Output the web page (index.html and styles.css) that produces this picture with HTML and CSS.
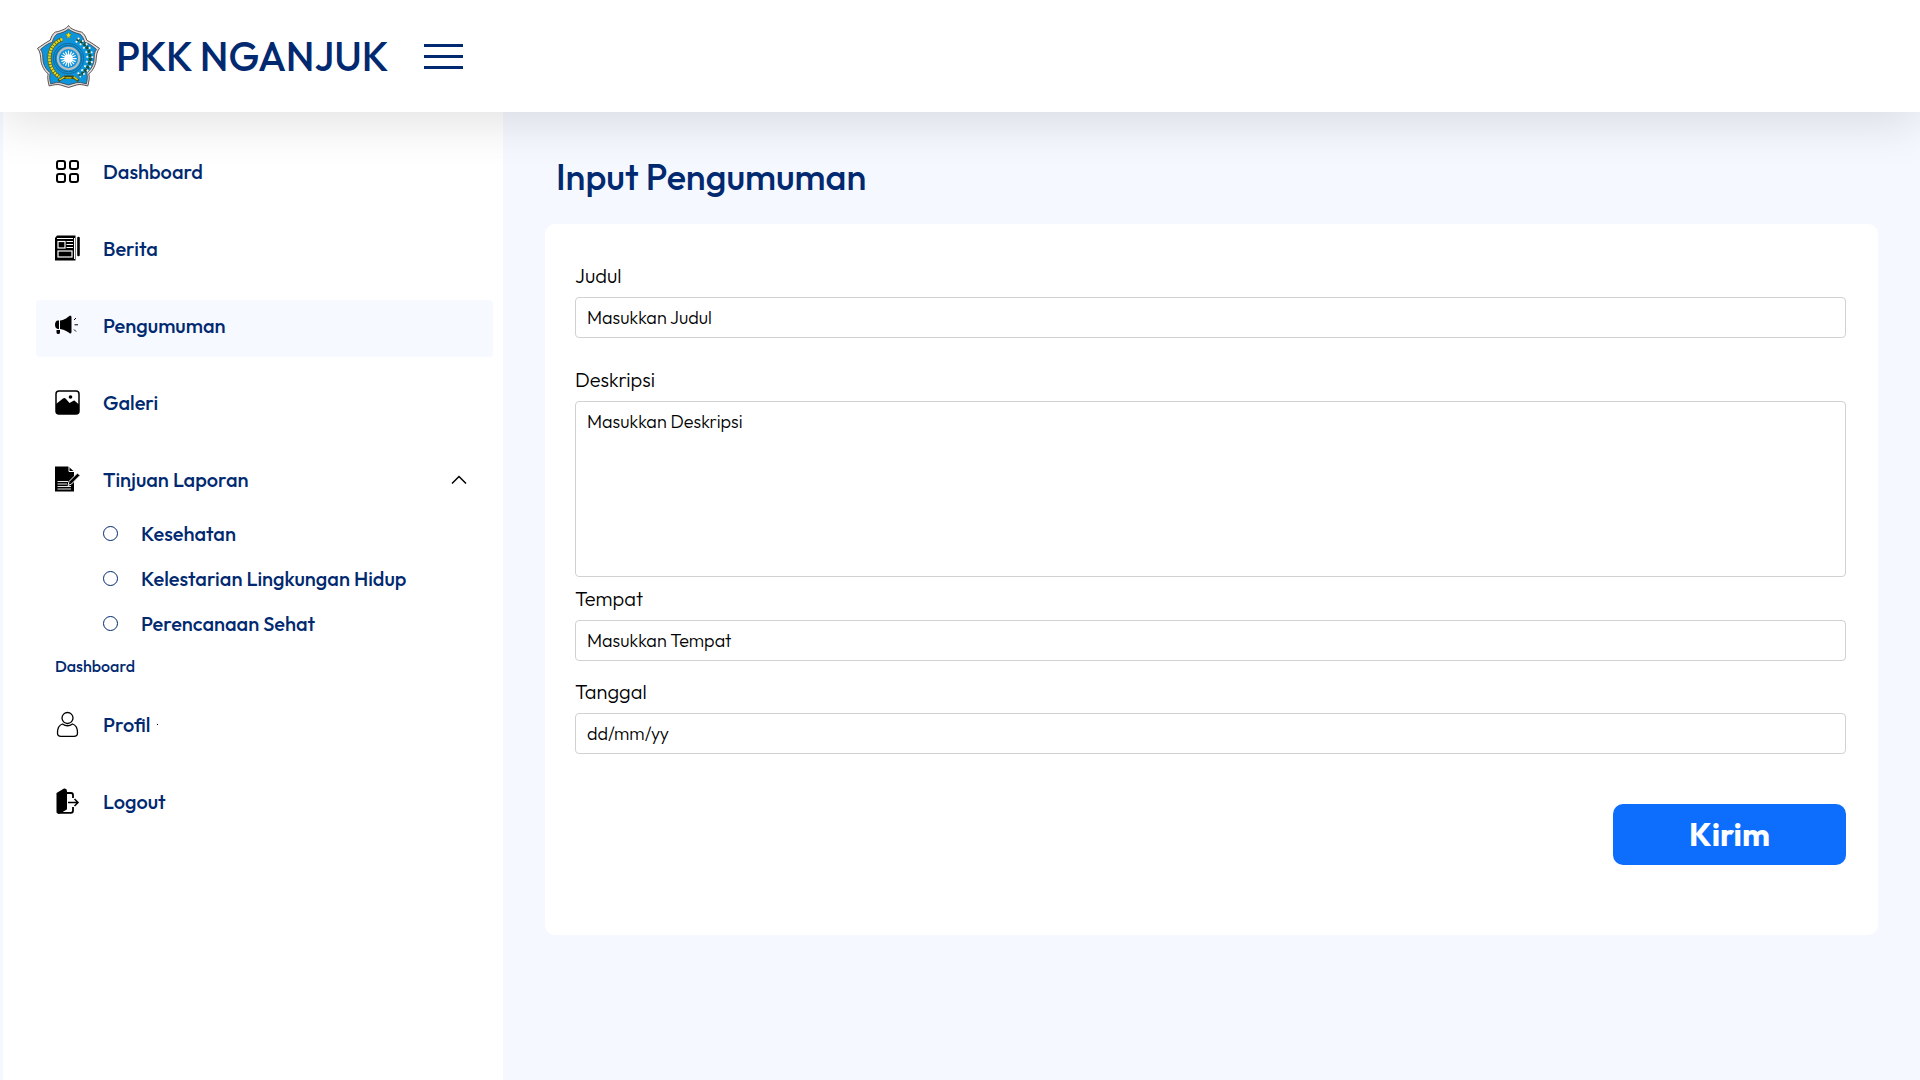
FILE: index.html
```html
<!DOCTYPE html>
<html lang="id">
<head>
<meta charset="utf-8">
<meta name="viewport" content="width=device-width, initial-scale=1">
<title>PKK Nganjuk - Input Pengumuman</title>
<link rel="stylesheet" href="styles.css">
</head>
<body>
<header class="topbar">
  <a class="brand" href="#">
    <svg class="logo" viewBox="0 0 62 62" aria-hidden="true">
      <path d="M31 .5C33 4 39 6 44 7C47 9 48 12 49 15C53 17 57 20 61.500 23C58.500 26 58.500 31 58 36C57 41 54 46 51 48C52 52 51 56 50 60C46 59 42 58 39 59L31 61.500L23 59C20 58 16 59 12 60C11 56 10 52 11 48C8 46 5 41 4 36C3.500 31 3.500 26 .5 23C5 20 9 17 13 15C14 12 15 9 18 7C23 6 29 4 31 .5Z" fill="#e2dede" stroke="#4a4040" stroke-width=".9"/>
      <path d="M31 4C34 6.500 38 8 42.500 9C45 11 46 14 47 17C51 18 55 21 58.500 24C56 27 56.500 31 56 36C55 41 52 45 49 47C50 51 49.500 54 48.500 58C45 57 41 56 38 57L31 59L24 57C21 56 17 57 13.500 58C12.500 54 12 51 13 47C10 45 7 41 6 36C5.500 31 6 27 3.500 24C7 21 11 18 15 17C16 14 17 11 19.500 9C24 8 28 6.500 31 4Z" fill="#0d95dc" stroke="#3d4147" stroke-width=".8"/>
      <path d="M31 7l1 2h2l-2 2 1 2-2-1-2 1 1-2-2-2h2z" fill="#ffe800" stroke="#6a6410" stroke-width=".4"/>
      <circle cx="31" cy="33" r="15" fill="none" stroke="#195d86" stroke-width=".8"/>
      <circle cx="31" cy="33" r="13" fill="#0d8fd0" stroke="#195d86" stroke-width=".8"/>
      <circle cx="31" cy="33" r="10.500" fill="#0d95dc" stroke="#b9bdc2" stroke-width="2"/>
      <path d="M31 25v16M23 33h16M25.500 27.500l11 11M36.500 27.500L25.500 38.500M28 26l6 14M34 26l-6 14M24 30l14 6M24 36l14-6" stroke="#fff" stroke-width="1.200"/>
      <circle cx="31" cy="33" r="4" fill="#fff"/>
      <path d="M25 14C9 19 8 42 22 51" fill="none" stroke="#59601a" stroke-width="4"/>
      <path d="M25 14C9 19 8 42 22 51" fill="none" stroke="#e8dc20" stroke-width="2.600" stroke-dasharray="2 .8"/>
      <path d="M39 14C56 21 57 42 41 50" fill="none" stroke="#15543a" stroke-width="3" stroke-dasharray="3 1"/>
      <path d="M40 13C59 21 59 42 42 51M38 16C53 23 53 40 40 48" fill="none" stroke="#f5f5f5" stroke-width="1.800" stroke-dasharray="1.800 3"/>
      <path d="M21 55l6-4h8l6 4M27 52h8" fill="none" stroke="#3f4712" stroke-width="2.400"/>
      <path d="M22 54l5-3M28 52h6M36 51l4 3" stroke="#d6c81f" stroke-width="1.400"/>
    </svg>
    <span>PKK NGANJUK</span>
  </a>
  <button class="menu-toggle" type="button" aria-label="Menu"><span></span><span></span><span></span></button>
</header>
<div class="layout">
  <nav class="sidebar">
    <a class="item" href="#">
      <svg class="icon" viewBox="0 0 26 26" fill="none" stroke="#000" stroke-width="2"><rect x="3" y="3" width="8" height="8" rx="2"/><rect x="16" y="3" width="8" height="8" rx="2"/><rect x="3" y="16" width="8" height="8" rx="2"/><rect x="16" y="16" width="8" height="8" rx="2"/></svg>
      <span>Dashboard</span>
    </a>
    <a class="item" href="#">
      <svg class="icon" viewBox="0 0 26 26"><path d="M3 0.500H21.500V25.500H1V3Z"/><path d="M24.500 3V20" stroke="#000" stroke-width="2.600" stroke-linecap="round"/><path d="M3 3.500H19" stroke="#fff"/><rect x="4" y="6.500" width="7" height="6.500" fill="none" stroke="#fff" stroke-width="1.200"/><path d="M12.500 6.500H19M12.500 9.500H19M12.500 12.500H19" stroke="#fff" stroke-width="1.200"/><rect x="4" y="16" width="14" height="6" fill="none" stroke="#fff" stroke-width="1.200"/><path d="M20.500 3V24" stroke="#fff"/></svg>
      <span>Berita</span>
    </a>
    <a class="item item-active" href="#" aria-current="page">
      <svg class="icon" viewBox="0 0 26 26"><path d="M5 8.500V17H4C2 17 1 15 1 12.800S2 8.500 4 8.500ZM6 8.500C11 8 14 5 16 3.500Q17.500 3.500 17.500 5V20Q17.500 21.500 16 21.500C14 20 11 17.500 6 17ZM2.500 18H6V20.500Q6 22 4.300 22T2.500 20.500Z"/><path d="M20 8l2-2M20.500 12.800H24M20 17.500l2 2" fill="none" stroke="#000"/></svg>
      <span>Pengumuman</span>
    </a>
    <a class="item" href="#">
      <svg class="icon" viewBox="0 0 26 26"><rect x="2" y="2" width="23" height="23" rx="3" fill="none" stroke="#000" stroke-width="1.500"/><path d="M2 15L9 9.500Q10.500 8.500 12 10L15.500 14L19 12Q20.500 11 21.500 12.500L25 15.500V22Q25 25 22 25H5Q2 25 2 22Z"/><circle cx="16.500" cy="8" r="1.800"/></svg>
      <span>Galeri</span>
    </a>
    <a class="item" href="#" aria-expanded="true">
      <svg class="icon" viewBox="0 0 26 26"><path d="M1 .5H14.500L20 5.500V25.500H1Z"/><path d="M15 0V5.500H20" fill="none" stroke="#fff"/><path d="M3.500 15.500H14M3.500 18H13M3.500 20.500H17M3.500 23H17" stroke="#fff" stroke-width=".9"/><path d="M14 19.500L15 15.500L23.500 7L26 9.500L17.500 18Z" stroke="#fff" stroke-width="1"/></svg>
      <span>Tinjuan Laporan</span>
      <svg class="chevron" viewBox="0 0 15 9" fill="none" stroke="#000" stroke-width="1.500"><path d="M.5 8.500L7.500 1.500L14.500 8.500"/></svg>
    </a>
    <ul class="submenu">
      <li><a href="#"><span class="ring"></span>Kesehatan</a></li>
      <li><a href="#"><span class="ring"></span>Kelestarian Lingkungan Hidup</a></li>
      <li><a href="#"><span class="ring"></span>Perencanaan Sehat</a></li>
    </ul>
    <p class="section">Dashboard</p>
    <a class="item" href="#">
      <svg class="icon" viewBox="0 0 26 26" fill="none" stroke="#000" stroke-width="1.300"><circle cx="13.500" cy="7" r="5.500"/><path d="M8.500 13C12 15.500 15 15.500 18.500 13C22 14 23.500 17 23.500 22Q23.500 25.300 20 25.300H7Q3.500 25.300 3.500 22C3.500 17 5 14 8.500 13Z"/></svg>
      <span>Profil</span><i class="speck"></i>
    </a>
    <a class="item" href="#">
      <svg class="icon" viewBox="0 0 26 26"><path d="M2.500 5L10 .5Q13 0 13 3V20.500Q13 21.500 12 22L6 25.500H4Q2.500 25.500 2.500 24Z"/><path d="M12 5H17Q19 5 19 7V10M19 19V22.500Q19 24.800 17 24.800H4" fill="none" stroke="#000" stroke-width="1.800"/><path d="M14 14.500H24M20.500 11L24 14.500L20.500 18" fill="none" stroke="#000" stroke-width="1.500"/></svg>
      <span>Logout</span>
    </a>
  </nav>
  <main class="content">
    <h1>Input Pengumuman</h1>
    <form class="card">
      <div class="field field-spaced">
        <label for="judul">Judul</label>
        <input id="judul" type="text" placeholder="Masukkan Judul">
      </div>
      <div class="field field-tight">
        <label for="deskripsi">Deskripsi</label>
        <textarea id="deskripsi" placeholder="Masukkan Deskripsi"></textarea>
      </div>
      <div class="field">
        <label for="tempat">Tempat</label>
        <input id="tempat" type="text" placeholder="Masukkan Tempat">
      </div>
      <div class="field">
        <label for="tanggal">Tanggal</label>
        <input id="tanggal" type="text" placeholder="dd/mm/yy">
      </div>
      <button class="submit" type="submit">Kirim</button>
    </form>
  </main>
</div>
</body>
</html>
```
FILE: styles.css
```css
* {
  box-sizing: border-box;
}

body {
  margin: 0;
  min-height: 100vh;
  display: flex;
  flex-direction: column;
  background: #f5f8ff;
  color: #012970;
  font-family: Outfit, Lato, sans-serif;
}

a {
  color: inherit;
  text-decoration: none;
}

.topbar {
  position: relative;
  z-index: 1;
  display: flex;
  align-items: center;
  gap: 35px;
  height: 112px;
  padding: 0 37px;
  background: #fff;
  box-shadow: 0 10px 50px rgba(0, 0, 0, 0.12);
}

.brand {
  display: flex;
  align-items: center;
  gap: 16px;
  font-size: 40px;
  font-weight: 500;
  line-height: 50px;
}

.logo {
  width: 63px;
  height: 63px;
}

.menu-toggle {
  display: flex;
  flex-direction: column;
  gap: 8px;
  width: 39px;
  padding: 0;
  border: 0;
  background: none;
}

.menu-toggle span {
  height: 3px;
  background: #012970;
}

.layout {
  flex: 1;
  display: flex;
}

.sidebar {
  flex: none;
  width: 500px;
  margin-left: 3px;
  padding: 34px 10px 34px 33px;
  background: #fff;
  font-size: 20px;
  font-weight: 500;
  line-height: 25px;
}

.item {
  display: flex;
  align-items: center;
  height: 57px;
  margin-bottom: 20px;
  padding: 0 26px 7px 18px;
  border-radius: 4px;
}

.item-active {
  background: #f6f9ff;
}

.icon {
  width: 26px;
  height: 26px;
  margin-right: 23px;
}

.chevron {
  width: 16px;
  height: 9px;
  margin-left: auto;
}

.submenu {
  margin: -20px 0 0;
  padding: 0 0 0 67px;
  list-style: none;
}

.submenu a {
  display: flex;
  align-items: center;
  gap: 23px;
  height: 45px;
}

.ring {
  width: 15px;
  height: 15px;
  border: 1px solid #012970;
  border-radius: 50%;
}

.section {
  margin: 0 0 13px;
  padding-left: 19px;
  font-size: 16px;
  line-height: 40px;
}

.speck {
  width: 1px;
  height: 1px;
  margin-left: 7px;
  background: #000;
}

.content {
  flex: 1;
  padding: 41px 42px 42px;
}

h1 {
  margin: 0 0 23px;
  padding-left: 11px;
  font-size: 36px;
  font-weight: 500;
  line-height: 48px;
}

.card {
  display: flex;
  flex-direction: column;
  padding: 39px 32px 70px 30px;
  border-radius: 10px;
  background: #fff;
  color: #000;
  font-weight: 300;
}

.field {
  display: flex;
  flex-direction: column;
  gap: 9px;
  margin-bottom: 18px;
}

.field-spaced {
  margin-bottom: 29px;
}

.field-tight {
  margin-bottom: 9px;
}

label {
  font-size: 20px;
  line-height: 25px;
}

input,
textarea {
  width: 100%;
  height: 41px;
  padding: 8px 11px;
  border: 1px solid #d1d1d1;
  border-radius: 4px;
  background: #fff;
  color: #000;
  font: inherit;
  font-size: 18px;
  line-height: 23px;
}

textarea {
  height: 176px;
  resize: none;
}

::placeholder {
  color: #000;
  opacity: 1;
}

.submit {
  align-self: flex-end;
  width: 233px;
  height: 61px;
  margin-top: 32px;
  padding: 0 0 2px;
  border: 0;
  border-radius: 10px;
  background: #0d6efd;
  color: #fff;
  font: inherit;
  font-size: 32px;
  font-weight: 700;
}
```
